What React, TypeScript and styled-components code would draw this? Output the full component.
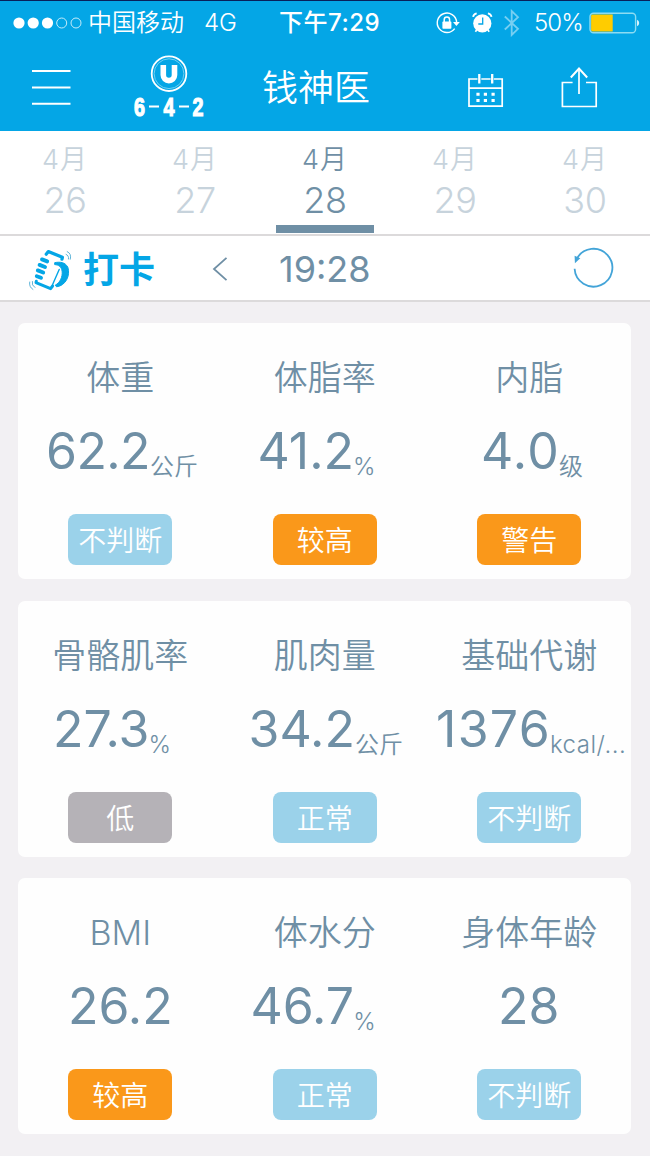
import React from "react";
import styled, { createGlobalStyle } from "styled-components";

const slate = "#6f8fa5";
const sky = "#04a6e6";

const Global = createGlobalStyle`
  * { box-sizing: border-box; }
  body { margin: 0; background: #f2f0f3; }
`;

const Screen = styled.div`
  width: 650px;
  height: 1156px;
  overflow: hidden;
  background: #f2f0f3;
  color: ${slate};
  font-family: Inter, "Noto Sans CJK SC", sans-serif;
  white-space: nowrap;
`;

const Header = styled.header`
  height: 131px;
  background: ${sky};
  border-top: 1px solid #08205a;
  color: #fff;
`;

const StatusBar = styled.div`
  display: grid;
  grid-template-columns: 88px 116px 75px 156px 37px 30px 32px 55px 60px;
  align-items: center;
  height: 42px;
  font-size: 24px;
  line-height: 44px;
  svg { display: block; margin-top: -1px; }
`;

const StatusText = styled.span<{ $weight?: number; $track?: number }>`
  font-weight: ${(p) => p.$weight ?? 350};
  letter-spacing: ${(p) => p.$track ?? 0}px;
`;

const NavBar = styled.div`
  display: grid;
  grid-template-columns: 132px 130px 205px 92px 91px;
  height: 87px;
  svg { display: block; }
`;

const MenuSlot = styled.div`padding: 26px 0 0 32px;`;
const CalendarSlot = styled.div`padding-top: 30px;`;
const ShareSlot = styled.div`padding-top: 23px;`;

const Logo = styled.div`
  width: 74px;
  padding-top: 12px;
  display: flex;
  flex-direction: column;
  align-items: center;
`;

const LogoCaption = styled.svg`
  margin-top: -4px;
`;

const Title = styled.h1`
  margin: 0;
  font-size: 36px;
  font-weight: 350;
  line-height: 90px;
`;

const Dates = styled.nav`
  display: grid;
  grid-template-columns: repeat(5, 130px);
  height: 105px;
  background: #fff;
  border-bottom: 2px solid #dcdadb;
`;

const Day = styled.div<{ $active?: boolean }>`
  display: flex;
  flex-direction: column;
  align-items: center;
  color: ${(p) => (p.$active ? slate : "#c7d3dc")};
`;

const Month = styled.span`
  height: 48px;
  padding-top: 5px;
  font-size: 27px;
  font-weight: 350;
  line-height: 48px;
  letter-spacing: 1px;
`;

const DateNumber = styled.span`
  height: 46px;
  font-size: 36px;
  font-weight: 350;
  line-height: 43px;
  letter-spacing: -0.4px;
`;

const Marker = styled.i`
  width: 98px;
  height: 8px;
  background: ${slate};
`;

const Toolbar = styled.div`
  display: grid;
  grid-template-columns: 83px 129px 67px 293px 60px;
  height: 66px;
  background: #fff;
  border-bottom: 2px solid #dcdadb;
  svg { display: block; }
`;

const ToolIcon = styled.div<{ $left?: number; $top: number }>`
  padding: ${(p) => p.$top}px 0 0 ${(p) => p.$left ?? 0}px;
`;

const CheckIn = styled.span`
  color: ${sky};
  font-size: 36px;
  font-weight: 700;
  line-height: 68px;
`;

const Clock = styled.span`
  font-size: 36px;
  font-weight: 380;
  line-height: 66px;
  letter-spacing: 0px;
`;

const Cards = styled.main`
  display: flex;
  flex-direction: column;
  gap: 21.5px;
  padding: 21px 19px 0 18px;
`;

const Card = styled.section`
  display: grid;
  grid-template-columns: repeat(3, 204.5px);
  height: 256px;
  border-radius: 7px;
  background: #fefefe;
`;

const Metric = styled.article`
  display: flex;
  flex-direction: column;
  min-width: 0;
`;

const Label = styled.h2`
  margin: 0;
  padding-top: 27px;
  height: 95px;
  text-align: center;
  font-size: 34px;
  font-weight: 350;
  line-height: 56px;
`;

const Reading = styled.div<{ $inset: number }>`
  display: flex;
  height: 96px;
  padding-left: ${(p) => p.$inset}px;
`;

const Value = styled.span<{ $track: number }>`
  font-size: 50px;
  line-height: 67px;
  letter-spacing: ${(p) => p.$track}px;
`;

const Unit = styled.span<{ $track: number; $gap: number }>`
  margin-left: ${(p) => p.$gap}px;
  padding-top: 19px;
  font-size: 24px;
  font-weight: 350;
  line-height: 60px;
  letter-spacing: ${(p) => p.$track}px;
`;

const tones = { blue: "#9bd2ea", orange: "#fa981a", grey: "#b5b2b7" };

const Badge = styled.span<{ $tone: keyof typeof tones }>`
  align-self: center;
  width: 104px;
  height: 51px;
  border-radius: 8px;
  background: ${(p) => tones[p.$tone]};
  color: #fff;
  text-align: center;
  font-size: 28px;
  font-weight: 350;
  line-height: 54px;
`;

type Item = {
  label: string;
  value: string;
  unit?: string;
  inset: number;
  track?: number;
  gap?: number;
  unitTrack?: number;
  badge: string;
  tone: keyof typeof tones;
};

const groups: Item[][] = [
  [
    { label: "体重", value: "62.2", unit: "公斤", inset: 28, track: -0.6, gap: 0, badge: "不判断", tone: "blue" },
    { label: "体脂率", value: "41.2", unit: "%", inset: 35, gap: -1, badge: "较高", tone: "orange" },
    { label: "内脂", value: "4.0", unit: "级", inset: 54, track: 1.2, gap: -1, badge: "警告", tone: "orange" },
  ],
  [
    { label: "骨骼肌率", value: "27.3", unit: "%", inset: 35, track: 0, gap: -1, badge: "低", tone: "grey" },
    { label: "肌肉量", value: "34.2", unit: "公斤", inset: 26, track: 0, gap: 0, badge: "正常", tone: "blue" },
    { label: "基础代谢", value: "1376", unit: "kcal/...", inset: 9, track: 1.3, gap: -1, unitTrack: 0.5, badge: "不判断", tone: "blue" },
  ],
  [
    { label: "BMI", value: "26.2", inset: 50, badge: "较高", tone: "orange" },
    { label: "体水分", value: "46.7", unit: "%", inset: 28, gap: -1, badge: "正常", tone: "blue" },
    { label: "身体年龄", value: "28", inset: 71, badge: "不判断", tone: "blue" },
  ],
];

const days = ["26", "27", "28", "29", "30"];

const Signal = () => (
  <svg width="88" height="14" viewBox="0 0 88 14" fill="#fff">
    <circle cx="19" cy="7" r="5.6" />
    <circle cx="33.2" cy="7" r="5.6" />
    <circle cx="47.5" cy="7" r="5.6" />
    <circle cx="61.7" cy="7" r="5" fill="none" stroke="#c5ecfa" />
    <circle cx="76" cy="7" r="5" fill="none" stroke="#c5ecfa" />
  </svg>
);

const RotationLock = () => (
  <svg width="26" height="24" viewBox="0 0 26 24" fill="none" stroke="#fff" strokeWidth="1.4">
    <path d="M19.7 17.6a9.7 9.7 0 1 1 1.9-6.6" />
    <path d="M18 11h6.8l-3.4 4z" fill="#fff" stroke="none" />
    <rect x="7.4" y="10.6" width="9" height="7.2" rx="0.8" fill="#fff" stroke="none" />
    <path d="M9.2 11V8.7a2.7 2.7 0 0 1 5.4 0V11" strokeWidth="1.5" />
  </svg>
);

const Alarm = () => (
  <svg width="22" height="24" viewBox="0 0 22 24" fill="none">
    <circle cx="10.3" cy="12.4" r="9.1" fill="#fff" />
    <path d="M1.1 5.8q.4-2.8 3.6-3.5M19.5 5.8q-.4-2.8-3.6-3.5" stroke="#fff" strokeWidth="1.8" />
    <path d="M4.8 18.8l-1.4 1.9M15.8 18.8l1.4 1.9" stroke="#fff" strokeWidth="1.7" />
    <path d="M10.7 6.6v6.4H6.3" stroke={sky} strokeWidth="1.3" />
  </svg>
);

const Bluetooth = () => (
  <svg width="18" height="28" viewBox="0 0 18 28" fill="none" stroke="#76cff2" strokeWidth="1.8">
    <path d="M2.8 7.5L16 19.8 9.7 26V2L16 8.2 2.8 20.5" />
  </svg>
);

const Battery = () => (
  <svg width="52" height="24" viewBox="0 0 52 24">
    <rect x="1" y="2.2" width="45.6" height="19.6" rx="3.5" fill="none" stroke="#8ddcf2" strokeWidth="1.4" />
    <path d="M3.5 3.4H23.7V20.5H3.5a1.5 1.5 0 0 1-1.4-1.5V5a1.5 1.5 0 0 1 1.4-1.6z" fill="#fc0" />
    <path d="M48 8.8q2.2.7 2.2 3.2t-2.2 3.2z" fill="#d8f3fc" />
  </svg>
);

const MenuIcon = () => (
  <svg width="39" height="38" viewBox="0 0 39 38" stroke="#fff" strokeWidth="2">
    <path d="M0 2h38.5M0 18.4h38.5M0 34.7h38.5" />
  </svg>
);

const LogoMark = () => (
  <svg width="38" height="38" viewBox="0 0 38 38" fill="none" stroke="#fff">
    <circle cx="19" cy="18.7" r="17.3" strokeWidth="1.8" />
    <circle cx="19" cy="18.7" r="14.9" strokeWidth="1" stroke="#6fd0f3" />
    <path d="M13.3 10V20a5.6 5.6 0 0 0 11.2 0V10" strokeWidth="5.6" />
  </svg>
);

const CalendarIcon = () => (
  <svg width="38" height="36" viewBox="0 0 38 36" fill="none" stroke="#fff" strokeWidth="1.7">
    <path d="M10.5 6H2v27.2h33.2V6h-8.4M14.3 6h9.3M2 15.2h33.2" />
    <path d="M12.3 1v9.5M25.2 1v9.5" strokeWidth="2.3" />
    <path d="M9.4 21.3h3.2m4.2 0h3.2m4.5 0h3.2M9.4 27.4h3.2m4.2 0h3.2m4.5 0h3.2" strokeWidth="3" />
  </svg>
);

const ShareIcon = () => (
  <svg width="40" height="42" viewBox="0 0 40 42" fill="none" stroke="#fff" strokeWidth="1.7">
    <path d="M13.6 16.5H3.4v24h33.8v-24H27M20 28V3" />
    <path d="M11.8 11.5L20 2.6l8.2 8.9" strokeWidth="2" />
  </svg>
);

const PhoneShake = () => (
  <svg width="46" height="44" viewBox="0 0 46 44" fill="none" stroke={sky} strokeLinecap="round" strokeLinejoin="round">
    <path d="M18.2 5.2L20.3 2.6 34.4 8.3 34 10.2" strokeWidth="3.2" />
    <path d="M8.3 32.3L8 33.6 22.6 39.6 24.6 37" strokeWidth="3" />
    <path d="M14 10.4l5.2 2M11.6 15.9l5.4 2.1M9.8 21.4l5.4 2.1M8.8 27.2l4.2 1.6" strokeWidth="3.9" />
    <path d="M31.2 20.5L24.4 36" strokeWidth="1.4" />
    <path d="M27 13.6c5-1 10.2-.4 12.8 4.6 2.9 8.3-2.3 18.6-11.2 19.6l-1.4-1.6c4.9-2.5 7.6-8.6 6.9-14-.6-4.4-3.6-6.5-7.1-6.6z" fill={sky} strokeWidth="1" />
    <path d="M38.1 5.4q3 1.1 2.4 4.6M39.2 2.6q4.6 2 3.1 7.6M4.3 32.5q-1 3.8 2.6 6M1.7 33q-.9 5 3.2 7.4" stroke="#5db4d8" strokeWidth="1" />
  </svg>
);

const BackIcon = () => (
  <svg width="18" height="26" viewBox="0 0 18 26" fill="none" stroke={slate} strokeWidth="1.8">
    <path d="M14.5 1.8L2 13l12.5 11.2" />
  </svg>
);

const RefreshIcon = () => (
  <svg width="44" height="42" viewBox="0 0 44 42" fill="none" stroke="#43a4d8" strokeWidth="1.8">
    <path d="M2.6 21.8A18.9 18.9 0 1 0 4.9 11.6" />
    <path d="M2.6 8.8l.3 7.5 5.4-5.1z" fill="#43a4d8" stroke="none" />
  </svg>
);

export default function App() {
  return (
    <Screen>
      <Global />
      <Header>
        <StatusBar>
          <Signal />
          <StatusText>中国移动</StatusText>
          <StatusText>4G</StatusText>
          <StatusText $weight={500} $track={0.5}>下午7:29</StatusText>
          <RotationLock />
          <Alarm />
          <Bluetooth />
          <StatusText $track={-0.9}>50%</StatusText>
          <Battery />
        </StatusBar>
        <NavBar>
          <MenuSlot><MenuIcon /></MenuSlot>
          <Logo>
            <LogoMark />
            <LogoCaption width="74" height="36" viewBox="0 -6 74 36" fill="#fff" stroke="#fff" strokeWidth="1.2">
              <g fontFamily="Liberation Sans" fontWeight="700" fontSize="26" textAnchor="middle">
                <text transform="translate(7.5 20.5) scale(.76 1)">6</text>
                <text transform="translate(37 20.5) scale(.76 1)">4</text>
                <text transform="translate(66 20.5) scale(.76 1)">2</text>
              </g>
              <path d="M17 11.5h10M47 11.5h10" strokeWidth="2" />
            </LogoCaption>
          </Logo>
          <Title>钱神医</Title>
          <CalendarSlot><CalendarIcon /></CalendarSlot>
          <ShareSlot><ShareIcon /></ShareSlot>
        </NavBar>
      </Header>
      <Dates>
        {days.map((d) => (
          <Day key={d} $active={d === "28"}>
            <Month>4月</Month>
            <DateNumber>{d}</DateNumber>
            {d === "28" && <Marker />}
          </Day>
        ))}
      </Dates>
      <Toolbar>
        <ToolIcon $left={28} $top={13}><PhoneShake /></ToolIcon>
        <CheckIn>打卡</CheckIn>
        <ToolIcon $top={20}><BackIcon /></ToolIcon>
        <Clock>19:28</Clock>
        <ToolIcon $top={11}><RefreshIcon /></ToolIcon>
      </Toolbar>
      <Cards>
        {groups.map((group, i) => (
          <Card key={i}>
            {group.map((m) => (
              <Metric key={m.label}>
                <Label>{m.label}</Label>
                <Reading $inset={m.inset}>
                  <Value $track={m.track ?? 0}>{m.value}</Value>
                  {m.unit && <Unit $track={m.unitTrack ?? 0} $gap={m.gap ?? 0}>{m.unit}</Unit>}
                </Reading>
                <Badge $tone={m.tone}>{m.badge}</Badge>
              </Metric>
            ))}
          </Card>
        ))}
      </Cards>
    </Screen>
  );
}
